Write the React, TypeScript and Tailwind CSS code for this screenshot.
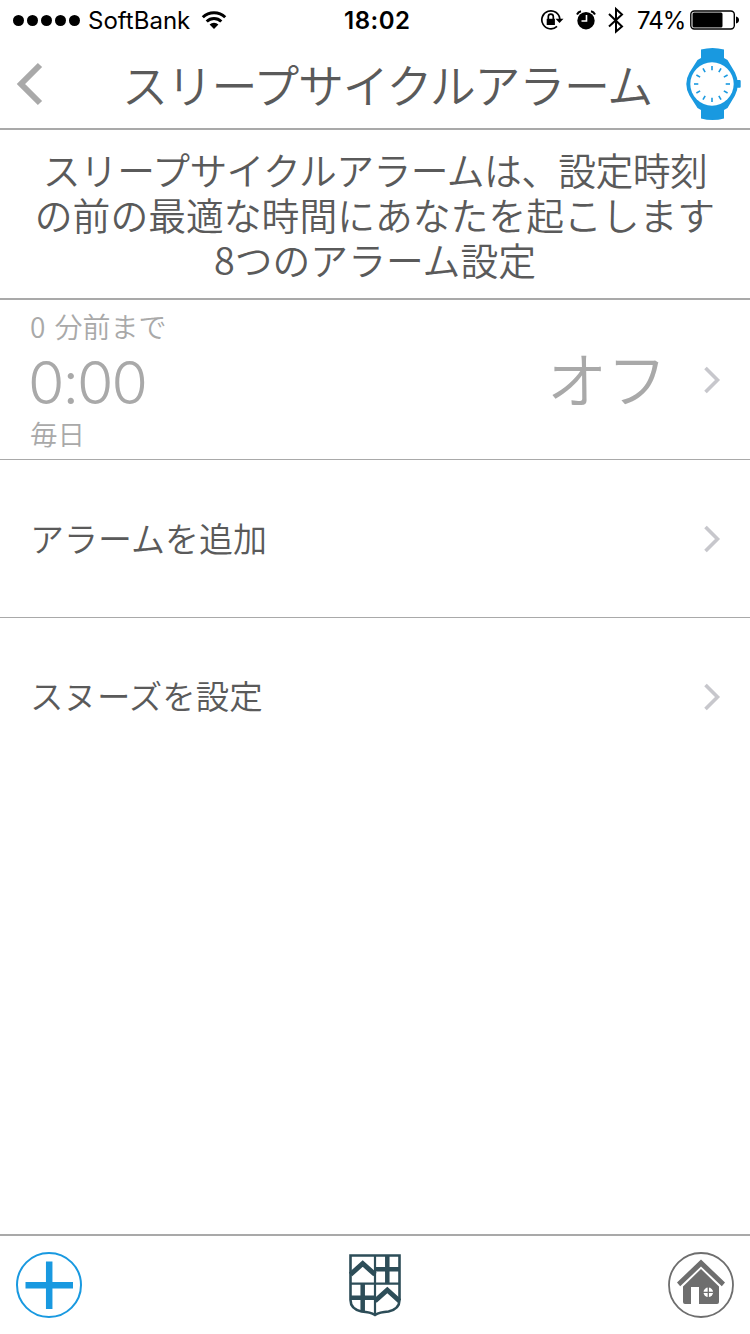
import React from "react";

const jp = "font-['Noto_Sans_CJK_JP',sans-serif]";

function Chevron() {
  return (
    <svg width="18" height="28" viewBox="0 0 18 28" fill="none" stroke="#c7c7cc" strokeWidth="3.6">
      <path d="M1.500 2 13.500 14 1.500 26" />
    </svg>
  );
}

function StatusBar() {
  return (
    <div className="relative flex h-10 items-center justify-between pl-[13px] pr-[11px] font-['Inter',sans-serif] text-2xl text-black">
      <div className="flex items-center">
        <div className="flex gap-[3px]">
          {[0, 1, 2, 3, 4].map((dot) => (
            <span key={dot} className="h-[11px] w-[11px] rounded-full bg-black" />
          ))}
        </div>
        <span className="ml-2 pt-[2px]">SoftBank</span>
        <svg className="ml-[11px]" width="26" height="20" viewBox="0 0 26 20" fill="none" stroke="#000" strokeWidth="3">
          <path d="M1.8 7.2a16 16 0 0 1 22.4 0" />
          <path d="M5.7 11.5a10.5 10.5 0 0 1 14.6 0" />
          <path d="M8.6 14.6a6.3 6.3 0 0 1 8.8 0L13 19z" fill="#000" stroke="none" />
        </svg>
      </div>
      <span className="absolute left-[344px] pt-[2px] font-semibold tracking-[0.5px]">18:02</span>
      <div className="flex items-center">
        <svg width="24" height="22" viewBox="0 0 24 22" fill="none" stroke="#000" strokeWidth="1.7">
          <path d="M19.800 10A9 9 0 1 0 17 17.400" />
          <path d="M15.500 9.800h8L19.500 14z" fill="#000" stroke="none" />
          <path d="M6.700 9.800h8.200V16H6.700z" fill="#000" stroke="none" />
          <path d="M8.300 10V7.600a2.500 2.500 0 0 1 5 0V10" />
        </svg>
        <svg className="ml-3" width="20" height="22" viewBox="0 0 20 22">
          <circle cx="10" cy="11.700" r="8.700" />
          <path d="M1 5.500A6 6 0 0 1 5 2.200M19 5.500A6 6 0 0 0 15 2.200" fill="none" stroke="#000" strokeWidth="2" />
          <path d="M10.500 6V12H5.500" fill="none" stroke="#fff" strokeWidth="1.600" />
        </svg>
        <svg className="ml-3" width="16" height="28" viewBox="0 0 16 28" fill="none" stroke="#000" strokeWidth="2">
          <path d="M1 8 14 20.500 8 25.500V3l6 5.500L1 20.500" />
        </svg>
        <span className="ml-[13px] w-[53px] pt-[2px] tracking-[-1px]">74%</span>
        <svg width="49" height="20" viewBox="0 0 49 20">
          <rect x=".8" y="1" width="43.500" height="18" rx="3.500" fill="none" stroke="#000" strokeWidth="1.400" />
          <rect x="2.500" y="2.600" width="30" height="14.800" rx="1.500" />
          <path d="M46 6.500q3 .8 3 3.500t-3 3.500z" />
        </svg>
      </div>
    </div>
  );
}

function Watch() {
  const ticks = Array.from({ length: 12 }, (_, i) => i * 30);
  return (
    <svg width="56" height="72" viewBox="0 0 56 72" fill="#1999e0">
      <path d="M15 1.500Q26.500-1.500 38 1.500V10l3.500 2L49 24.500Q51.800 30 51.800 36T49 47.500L41.500 60 38 62v8.500Q26.500 73.500 15 70.500V62l-3.500-2L3.500 47.500Q.3 42 .3 36T3.500 24.500L11.500 12 15 10z" />
      <rect x="50" y="32" width="4.700" height="7.700" rx="1" />
      <circle cx="26" cy="36" r="21.700" fill="#fff" />
      {ticks.map((angle) => (
        <path
          key={angle}
          d="M26 18v4.300"
          stroke="#1999e0"
          strokeWidth="1.600"
          transform={`rotate(${angle} 26 36)`}
        />
      ))}
    </svg>
  );
}

function Header() {
  return (
    <header className="flex h-[90px] items-center border-b-2 border-[#a9a9a9] pl-4 pr-[8px]">
      <svg width="28" height="44" viewBox="0 0 28 44" fill="none" stroke="#a9a9a9" strokeWidth="6">
        <path d="M24 3 5 22l19 19" />
      </svg>
      <h1 className="flex-1 pb-[2px] pl-[78px] text-[46px] leading-[66px] font-[350] tracking-[-1.3px] whitespace-nowrap">
        スリープサイクルアラーム
      </h1>
      <Watch />
    </header>
  );
}

function Shield() {
  return (
    <svg width="54" height="64" viewBox="0 0 54 64" fill="none" stroke="#2d4d58">
      <path strokeWidth="2.600" d="M2.500 2.500h49V47q0 9-11 11.500-9 .5-13.500 3.500-4.500-3-13.500-3.500Q2.500 56 2.500 47z" />
      <path strokeWidth="2.200" d="M27 2v59M2 30.700h50" />
      <path strokeWidth="4.500" d="M39.300 2v28M27 16.300h25M14.700 31v28M2 44.700h25" />
      <path strokeWidth="5" d="M2.500 21.500 14.700 10.500 27 21.500M27 48l12.300-11L51.500 48" />
    </svg>
  );
}

function Footer() {
  return (
    <footer className="flex h-[100px] items-center justify-between border-t-2 border-[#a9a9a9] px-4">
      <svg width="66" height="66" viewBox="0 0 66 66" fill="none" stroke="#1999e0">
        <circle cx="33" cy="33" r="32" strokeWidth="2" />
        <path d="M33.200 9.500V57M9.500 33.300H57" strokeWidth="6.500" />
      </svg>
      <Shield />
      <svg width="66" height="66" viewBox="0 0 66 66" fill="#6e6e6e">
        <circle cx="33" cy="33" r="32" fill="none" stroke="#6e6e6e" strokeWidth="1.800" />
        <path d="M33 7.500 57 30.500l-3.200 3.700L33 14.500 12.200 34.200 9 30.500z" />
        <path d="M33 17 51 34.500V50q0 2-2 2H31V35h-8v17h-6q-2 0-2-2V34.500z" />
        <circle cx="40.300" cy="40.300" r="4.800" fill="#fff" />
        <path d="M40.300 35v10.600M35 40.300h10.600" stroke="#6e6e6e" strokeWidth="1.300" />
      </svg>
    </footer>
  );
}

export default function App() {
  return (
    <div className={`flex h-[1334px] w-[750px] flex-col overflow-hidden bg-white text-[#5a5a5a] ${jp}`}>
      <StatusBar />
      <Header />
      <div className="h-[170px] border-b-2 border-[#a9a9a9] pt-[16px] text-center text-[37.800px] leading-[45px] font-[350] whitespace-nowrap">
        <p className="tracking-[-0.6px]">スリープサイクルアラームは、設定時刻</p>
        <p>の前の最適な時間にあなたを起こします</p>
        <p>8つのアラーム設定</p>
      </div>
      <main className="flex-1">
        <div className="flex h-40 items-center border-b border-[#a9a9a9] pr-[28px] pl-[30px] text-[#a9a9a9]">
          <div className="flex-1 font-[350]">
            <div className="-mt-1 text-[28px] leading-[40px] [word-spacing:3px]">0 分前まで</div>
            <div className="-ml-[2px] pt-[3px] font-['Inter','Noto_Sans_CJK_JP',sans-serif] text-[59px] leading-[67px] font-light tracking-[-2px]">
              0:00
            </div>
            <div className="text-[27.500px] leading-[34px]">毎日</div>
          </div>
          <span className="mr-[37px] pb-[5px] text-[60px] leading-[80px] font-[350]">オフ</span>
          <Chevron />
        </div>
        <div className="flex h-[158px] items-center justify-between border-b border-[#a9a9a9] pr-[28px] pl-[30px]">
          <span className="pb-[3px] text-[34px] font-[350]">アラームを追加</span>
          <Chevron />
        </div>
        <div className="flex h-[158px] items-center justify-between pr-[28px] pl-[30px]">
          <span className="pb-[3px] text-[33.500px] font-[350]">スヌーズを設定</span>
          <Chevron />
        </div>
      </main>
      <Footer />
    </div>
  );
}
